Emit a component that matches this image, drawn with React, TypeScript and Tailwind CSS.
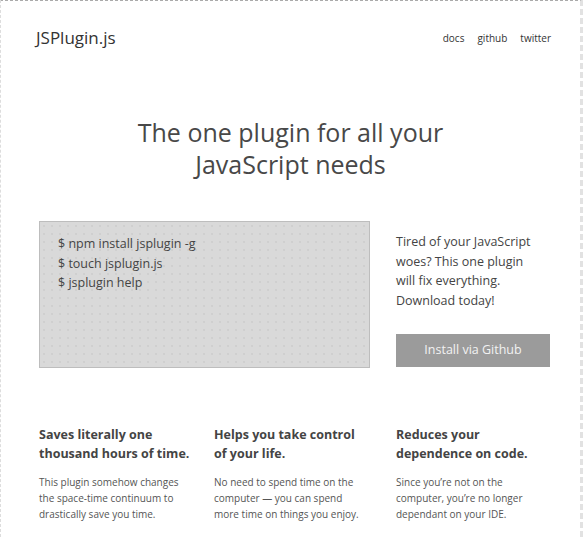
import React from "react";

const features = [
  {
    title: "Saves literally one thousand hours of time.",
    body: "This plugin somehow changes the space-time continuum to drastically save you time.",
    col: "w-[175px]",
    headW: "w-[160px]",
    bodyW: "w-[145px]",
  },
  {
    title: "Helps you take control of your life.",
    body: "No need to spend time on the computer — you can spend more time on things you enjoy.",
    col: "w-[182px]",
    headW: "w-[150px]",
    bodyW: "w-[150px]",
  },
  {
    title: "Reduces your dependence on code.",
    body: "Since you’re not on the computer, you’re no longer dependant on your IDE.",
    col: "w-[156px]",
    headW: "w-[150px]",
    bodyW: "w-[140px]",
  },
];

export default function App() {
  return (
    <div
      className="w-[583px] h-[537px] overflow-hidden bg-white text-[#444] border-t border-dashed border-t-[#aaa] border-l border-l-[#ddd] border-r-[3px] border-r-[#e2e2e2] box-border"
      style={{ fontFamily: '"Open Sans", "Noto Sans", sans-serif', borderLeftStyle: "dashed" }}
    >
      <header className="flex items-center justify-between pl-[35px] pr-[29px] pt-[24px] h-[50px]">
        <div className="text-[17px] leading-[26px] text-[#333]">JSPlugin.js</div>
        <nav className="flex gap-[13px] text-[10px] text-[#333]">
          <a>docs</a>
          <a>github</a>
          <a>twitter</a>
        </nav>
      </header>

      <h1 className="mt-[65px] text-center text-[25px] leading-[32px] text-[#484848]">
        The one plugin for all your
        <br />
        JavaScript needs
      </h1>

      <section className="mt-[41px] flex pl-[38px]">
        <div
          className="w-[331px] h-[147px] border border-[#bdbdbd] bg-[#d9d9d9] pl-[18px] pt-[12px] text-[12.5px] leading-[19.5px] text-[#444]"
          style={{
            backgroundImage: "radial-gradient(#c2c2c2 0.6px, transparent 0.8px)",
            backgroundSize: "8px 8px",
          }}
        >
          <p>$ npm install jsplugin -g</p>
          <p>$ touch jsplugin.js</p>
          <p>$ jsplugin help</p>
        </div>
        <div className="ml-[26px] w-[155px] pt-[11px]">
          <p className="text-[12.5px] leading-[19.5px] text-[#444] pr-[10px]">
            Tired of your JavaScript woes? This one plugin will fix everything. Download today!
          </p>
          <button className="mt-[24px] w-[154px] h-[33px] bg-[#9b9b9b] text-[12.5px] text-[#f2f2f2]">
            Install via Github
          </button>
        </div>
      </section>

      <section className="mt-[57px] flex pl-[38px]">
        {features.map((f, i) => (
          <div key={i} className={f.col}>
            <h2 className={`text-[12.5px] leading-[19px] font-bold text-[#444] ${f.headW}`}>{f.title}</h2>
            <p className={`mt-[11px] text-[10px] leading-[16px] text-[#555] ${f.bodyW}`}>{f.body}</p>
          </div>
        ))}
      </section>
    </div>
  );
}
